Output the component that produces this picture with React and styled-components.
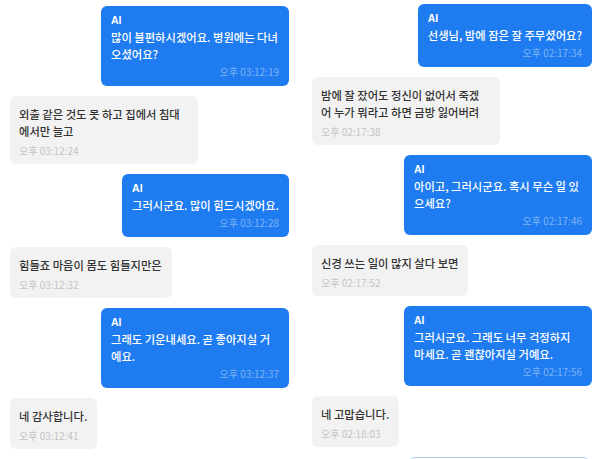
import React from "react";
import styled, { createGlobalStyle } from "styled-components";

const Global = createGlobalStyle`
  html, body { margin: 0; padding: 0; background: #ffffff; }
  body {
    width: 600px;
    height: 459px;
    overflow: hidden;
    font-family: "Noto Sans CJK KR", "Noto Sans", sans-serif;
    -webkit-font-smoothing: antialiased;
  }
`;

const Page = styled.div`
  display: grid;
  grid-template-columns: 279px 280px;
  column-gap: 23px;
  padding: 0 8px 0 10px;
  height: 459px;
  overflow: hidden;
`;

const Column = styled.div`
  display: flex;
  flex-direction: column;
  gap: 10px;
  padding-top: ${(p) => p.$top}px;
`;

const Bubble = styled.div`
  box-sizing: border-box;
  width: ${(p) => (p.$full ? "188px" : "auto")};
  border-radius: 6px;
  align-self: ${(p) => (p.$ai ? "flex-end" : "flex-start")};
  background: ${(p) => (p.$ai ? "#1f7cf0" : "#f2f2f2")};
  color: ${(p) => (p.$ai ? "#ffffff" : "#333333")};
  padding: ${(p) => (p.$ai ? "5px 10px 5px 10px" : "10px 10px 4px 9px")};
  display: flex;
  flex-direction: column;
`;

const Label = styled.div`
  font-family: "Liberation Sans", "Noto Sans CJK KR", sans-serif;
  font-weight: 700;
  font-size: 10.5px;
  line-height: 18px;
`;

const Line = styled.div`
  font-size: 11.3px;
  font-weight: 500;
  line-height: 17px;
  white-space: nowrap;
`;

const Time = styled.div`
  font-size: 10px;
  line-height: 18px;
  margin-top: ${(p) => (p.$ai ? "0" : "2px")};
  text-align: ${(p) => (p.$ai ? "right" : "left")};
  color: ${(p) => (p.$ai ? "rgba(255,255,255,0.42)" : "#c4c4c4")};
`;

const Peek = styled.div`
  align-self: flex-end;
  width: 180px;
  margin-right: 3px;
  height: 6px;
  border-radius: 6px 6px 0 0;
  border-top: 1px solid #a9c9ec;
`;

const left = [
  { ai: true, lines: ["많이 불편하시겠어요. 병원에는 다녀", "오셨어요?"], time: "오후 03:12:19" },
  { ai: false, lines: ["외출 같은 것도 못 하고 집에서 침대", "에서만 늘고"], time: "오후 03:12:24" },
  { ai: true, lines: ["그러시군요. 많이 힘드시겠어요."], time: "오후 03:12:28" },
  { ai: false, lines: ["힘들죠 마음이 몸도 힘들지만은"], time: "오후 03:12:32" },
  { ai: true, lines: ["그래도 기운내세요. 곧 좋아지실 거", "예요."], time: "오후 03:12:37" },
  { ai: false, lines: ["네 감사합니다."], time: "오후 03:12:41" },
];

const right = [
  { ai: true, lines: ["선생님, 밤에 잠은 잘 주무셨어요?"], time: "오후 02:17:34" },
  { ai: false, lines: ["밤에 잘 잤어도 정신이 없어서 죽겠", "어 누가 뭐라고 하면 금방 잃어버려"], time: "오후 02:17:38" },
  { ai: true, lines: ["아이고, 그러시군요. 혹시 무슨 일 있", "으세요?"], time: "오후 02:17:46" },
  { ai: false, lines: ["신경 쓰는 일이 많지 살다 보면"], time: "오후 02:17:52" },
  { ai: true, lines: ["그러시군요. 그래도 너무 걱정하지", "마세요. 곧 괜찮아지실 거예요."], time: "오후 02:17:56" },
  { ai: false, lines: ["네 고맙습니다."], time: "오후 02:18:03" },
];

function Message({ m }) {
  return (
    <Bubble $ai={m.ai} $full={m.lines.length > 1}>
      {m.ai && <Label>AI</Label>}
      {m.lines.map((l, i) => (
        <Line key={i}>{l}</Line>
      ))}
      <Time $ai={m.ai}>{m.time}</Time>
    </Bubble>
  );
}

export default function App() {
  return (
    <>
      <Global />
      <Page>
        <Column $top={6}>
          {left.map((m, i) => (
            <Message key={i} m={m} />
          ))}
        </Column>
        <Column $top={4}>
          {right.map((m, i) => (
            <Message key={i} m={m} />
          ))}
          <Peek />
        </Column>
      </Page>
    </>
  );
}
